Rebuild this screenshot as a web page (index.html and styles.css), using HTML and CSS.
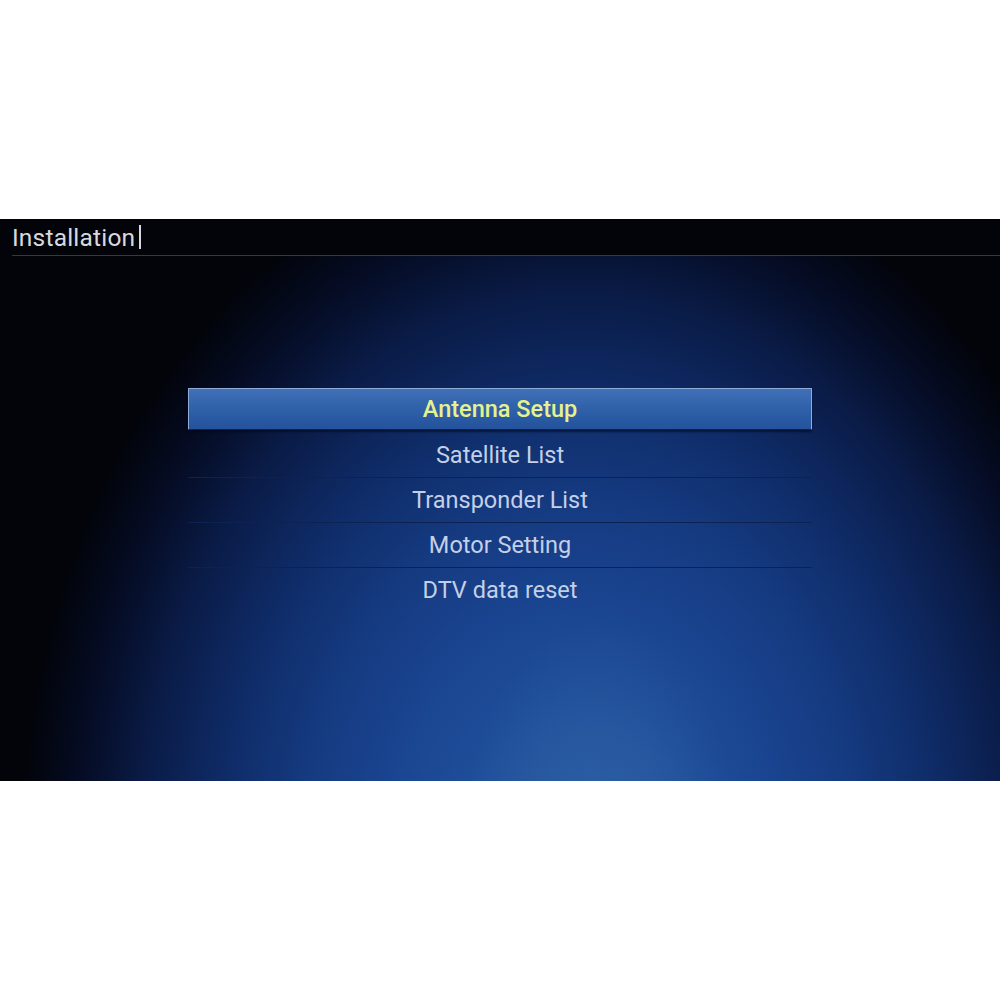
FILE: index.html
```html
<!DOCTYPE html>
<html lang="en">
<head>
    <meta charset="UTF-8">
    <title>Installation</title>
    <link rel="stylesheet" href="styles.css">
</head>
<body>
    <div class="screen">
        <div class="header">
            <span class="title">Installation</span><span class="caret"></span>
        </div>

        <ul class="menu">
            <li class="item selected">Antenna Setup</li>
            <li class="item">Satellite List</li>
            <li class="item">Transponder List</li>
            <li class="item">Motor Setting</li>
            <li class="item">DTV data reset</li>
        </ul>
    </div>
</body>
</html>
```

FILE: styles.css
```css
:root {
    --text-color: #c3d0e8;
    --active-color: #e6f28c;
}
body {
    margin: 0;
    background-color: #fff;
    font-family: Roboto, "Noto Sans", "Liberation Sans", sans-serif;
}
.screen {
    margin-top: 219px;
    height: 562px;
    background:
        radial-gradient(ellipse 140px 240px at 600px 640px, rgba(60, 110, 174, 0.5), rgba(60, 110, 174, 0) 100%),
        radial-gradient(ellipse 560px 720px at 580px 640px, #2458a0 0%, #1f4f9a 20%, #1a4490 36%, #153a80 50%, #0f2c68 64%, #0a1c48 78%, #050c24 90%, #02040a 100%),
        #02040a;
    overflow: hidden;
}
.header {
    display: flex;
    align-items: center;
    height: 36px;
    margin-left: 12px;
    border-bottom: 1px solid #2b3a52;
    background: #02040a;
}
.title {
    color: #d7d9de;
    font-size: 24.5px;
    letter-spacing: 0.2px;
}
.caret {
    width: 2px;
    height: 24px;
    margin-left: 4px;
    background-color: #d7d9de;
}
.menu {
    list-style: none;
    width: 624px;
    margin: 132px 0 0 188px;
    padding: 0;
}
.item {
    box-sizing: border-box;
    height: 45px;
    padding-bottom: 1px;
    display: flex;
    align-items: center;
    justify-content: center;
    color: var(--text-color);
    font-size: 23.5px;
    border-bottom: 1px solid #0c2252;
}
.item:last-child {
    border-bottom: none;
}
.item.selected {
    height: 42px;
    padding-bottom: 0;
    margin-bottom: 3px;
    color: var(--active-color);
    font-weight: 500;
    background: linear-gradient(to bottom, #4070b8 0%, #3062aa 45%, #24529c 100%);
    border: 1px solid #92acd8;
    border-bottom: 1px solid #0d2250;
    border-radius: 1px;
    box-shadow: 0 2px 2px rgba(0, 8, 30, 0.6);
}
```
